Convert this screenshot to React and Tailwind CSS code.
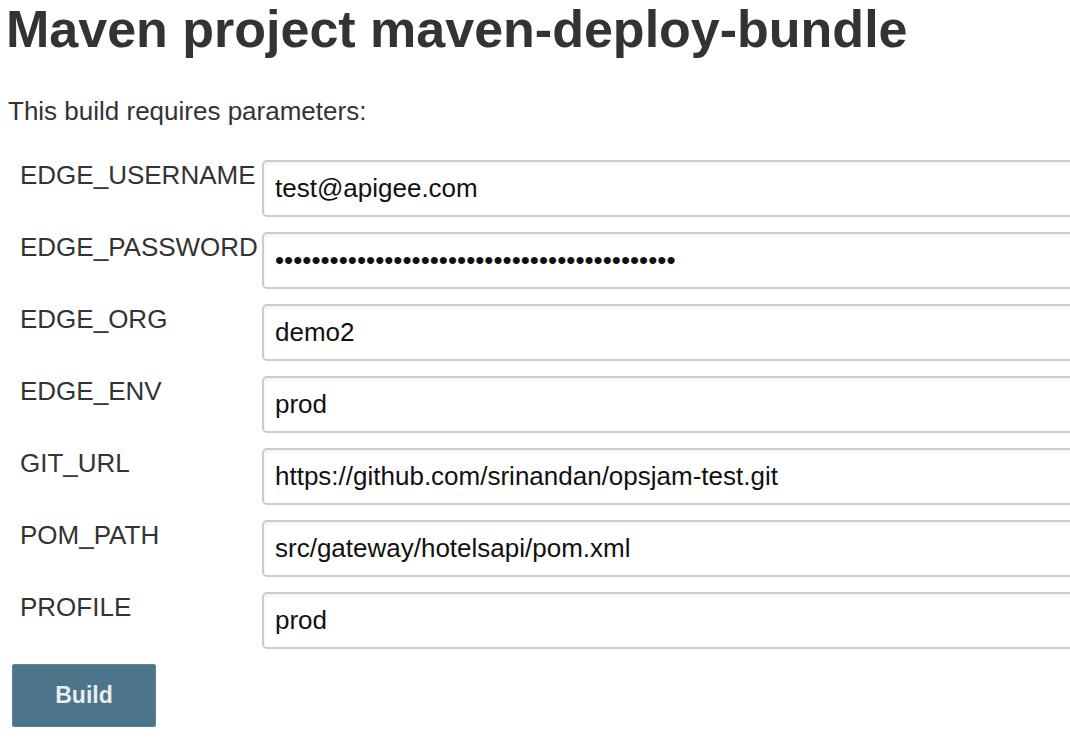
import React from 'react'

const params = [
  { name: 'EDGE_USERNAME', value: 'test@apigee.com' },
  { name: 'EDGE_PASSWORD', value: 'x'.repeat(44), secret: true },
  { name: 'EDGE_ORG', value: 'demo2' },
  { name: 'EDGE_ENV', value: 'prod' },
  { name: 'GIT_URL', value: 'https://github.com/srinandan/opsjam-test.git' },
  { name: 'POM_PATH', value: 'src/gateway/hotelsapi/pom.xml' },
  { name: 'PROFILE', value: 'prod' },
]

const App = () => {
  return (
    <div className="w-[1070px] h-[748px] overflow-hidden bg-white text-[#333] font-['Liberation_Sans',Arial,sans-serif]">
      {/* Header */}
      <h1 className="pl-[6px] text-[52px] font-bold leading-[58px] whitespace-nowrap">
        Maven project maven-deploy-bundle
      </h1>
      <p className="mt-[38px] pl-[8px] text-[26px] leading-[30px]">This build requires parameters:</p>

      {/* Parameters */}
      <form className="mt-[34px] flex flex-col gap-[15px]" onSubmit={(e) => e.preventDefault()}>
        {params.map((p) => (
          <div key={p.name} className="flex items-start">
            <label className="w-[262px] shrink-0 pl-[20px] text-[26px] leading-[30px] whitespace-nowrap">
              {p.name}
            </label>
            <input
              type={p.secret ? 'password' : 'text'}
              defaultValue={p.value}
              readOnly
              className="w-[860px] shrink-0 h-[57px] px-[11px] border-2 border-[#ccc] rounded-[5px] bg-white text-[26px] text-[#111] shadow-[inset_0_2px_3px_rgba(0,0,0,0.06)] outline-none font-['Liberation_Sans',Arial,sans-serif]"
            />
          </div>
        ))}
        <div className="pl-[12px]">
          <button
            type="submit"
            className="w-[144px] h-[63px] bg-[#4b758b] border border-[#5d8499] rounded-[2px] text-[23px] font-bold text-[#ececec]"
          >
            Build
          </button>
        </div>
      </form>
    </div>
  )
}

export default App
